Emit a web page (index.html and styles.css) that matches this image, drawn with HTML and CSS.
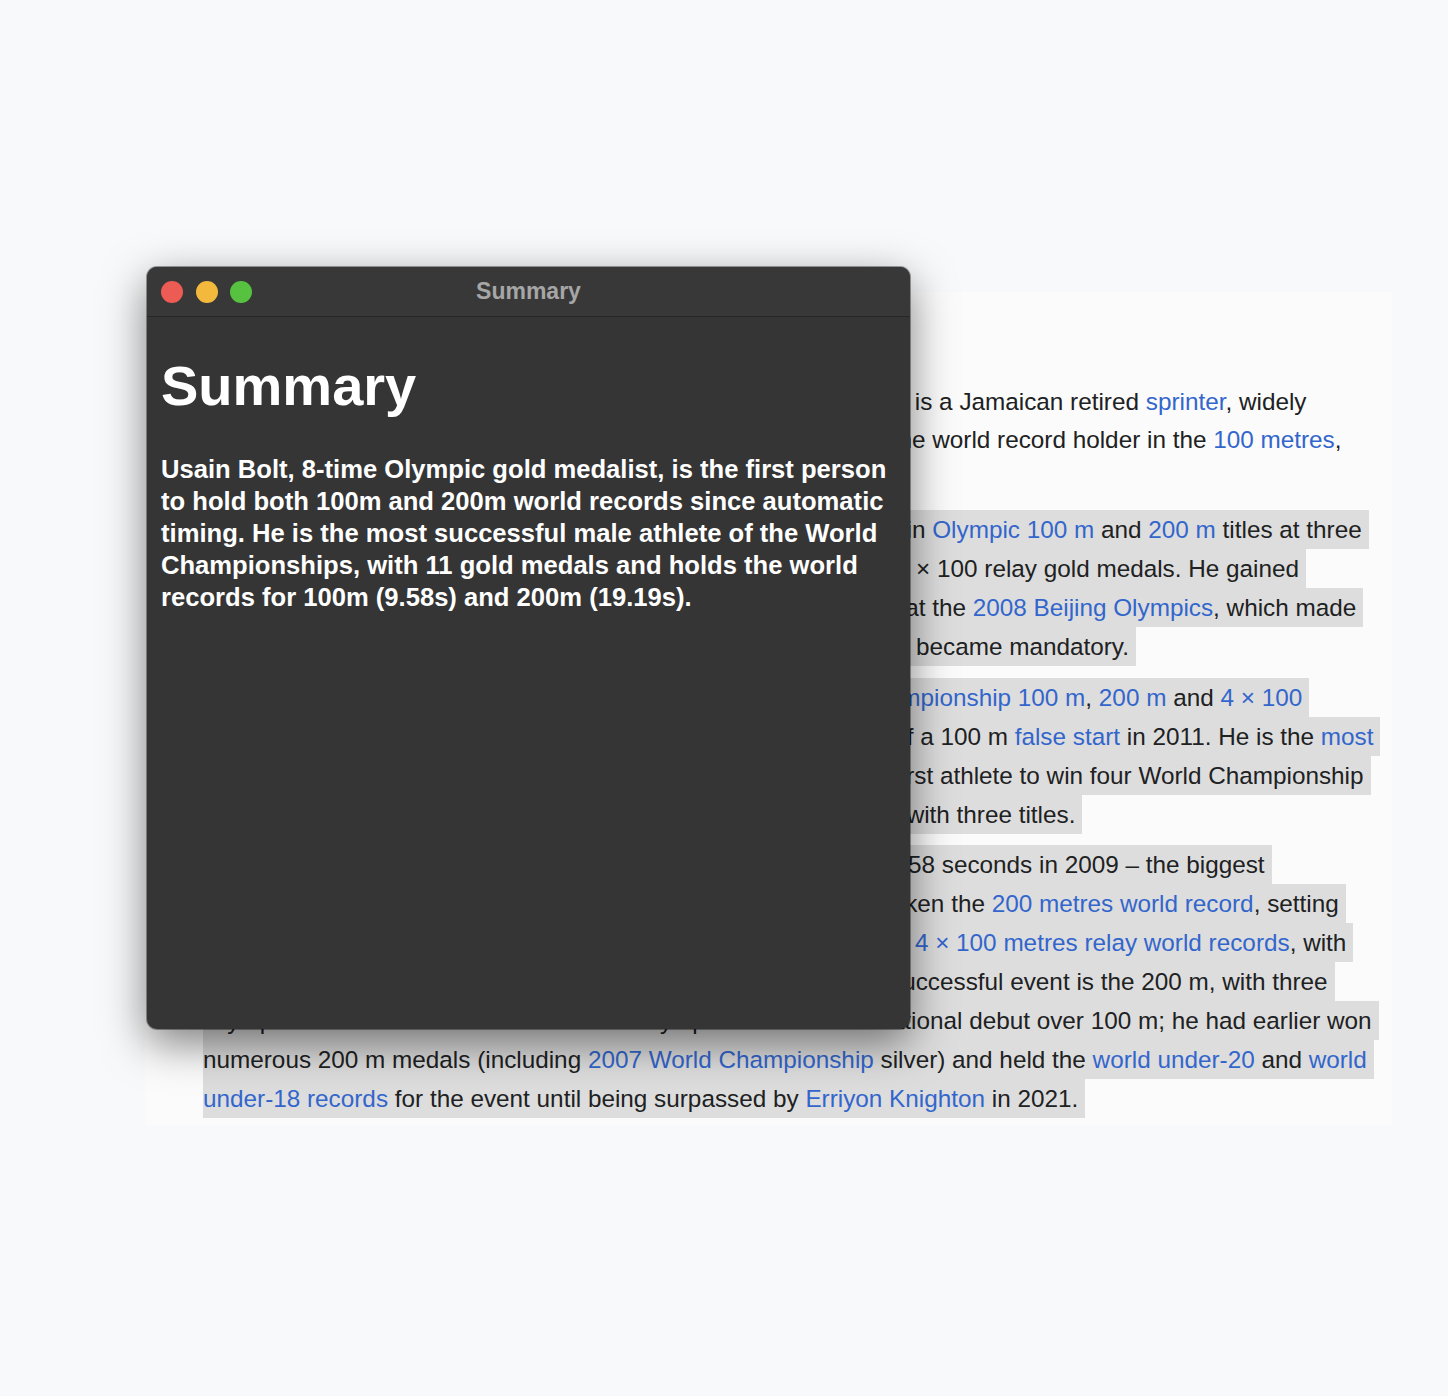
FILE: index.html
```html
<!DOCTYPE html>
<html lang="en">
<head>
<meta charset="utf-8">
<title>Summary</title>
<link rel="stylesheet" href="styles.css">
</head>
<body>
<div class="page">
  <article class="card">
    <p>Usain St Leo Bolt CD (/ˈjuːseɪn/ YOO-sayn; born 21 August 1986) is a Jamaican retired <a href="#">sprinter</a>, widely<br>considered to be the greatest sprinter of all time. He is currently the world record holder in the <a href="#">100 metres</a>,<br><a href="#">200 metres</a> and <a href="#">4 × 100 metres relay</a>.</p>
    <p><span class="hl">An eight-time Olympic gold medallist, Bolt is the only sprinter to win <a href="#">Olympic 100 m</a> and <a href="#">200 m</a> titles at three<br>consecutive Olympics (2008, 2012, and 2016). He also won two 4 × 100 relay gold medals. He gained<br>worldwide fame for his double sprint victory in world record times at the <a href="#">2008 Beijing Olympics</a>, which made<br>him the first person to hold both records since fully automatic time became mandatory.</span></p>
    <p><span class="hl">An eleven-time World Champion, he won consecutive <a href="#">World Championship 100 m</a>, <a href="#">200 m</a> and <a href="#">4 × 100<br>metres relay</a> gold medals from 2009 to 2015, with the exception of a 100 m <a href="#">false start</a> in 2011. He is the <a href="#">most<br>successful male athlete of the World Championships</a>. Bolt is the first athlete to win four World Championship<br>titles in the 200 m and is one of the most successful in the 100 m with three titles.</span></p>
    <p><span class="hl">Bolt improved upon his second 100 m world record of 9.69 with 9.58 seconds in 2009 – the biggest<br>improvement since the start of electronic timing. He has twice broken the <a href="#">200 metres world record</a>, setting<br>19.30 in 2008 and 19.19 in 2009. He has helped Jamaica to three <a href="#">4 × 100 metres relay world records</a>, with<br>the current record being 36.84 seconds set in 2012. Bolt’s most successful event is the 200 m, with three<br>Olympic and four World titles. The 2008 Olympics was his international debut over 100 m; he had earlier won<br>numerous 200 m medals (including <a href="#">2007 World Championship</a> silver) and held the <a href="#">world under-20</a> and <a href="#">world<br>under-18 records</a> for the event until being surpassed by <a href="#">Erriyon Knighton</a> in 2021.</span></p>
  </article>

  <section class="window">
    <header class="titlebar">
      <div class="lights">
        <span class="dot dot-close"></span>
        <span class="dot dot-min"></span>
        <span class="dot dot-max"></span>
      </div>
      <div class="title">Summary</div>
      <div></div>
    </header>
    <div class="content">
      <h1>Summary</h1>
      <p class="summary">Usain Bolt, 8-time Olympic gold medalist, is the first person to hold both 100m and 200m world records since automatic timing. He is the most successful male athlete of the World Championships, with 11 gold medals and holds the world records for 100m (9.58s) and 200m (19.19s).</p>
    </div>
  </section>
</div>
</body>
</html>
```

FILE: styles.css
```css
html, body {
  margin: 0;
  padding: 0;
}

body {
  background: #f8f9fa;
  font-family: "Liberation Sans", Arial, Helvetica, sans-serif;
}

.page {
  position: relative;
  width: 1448px;
  height: 1396px;
  padding-top: 292px;
  box-sizing: border-box;
  overflow: hidden;
}

.card {
  width: 1247px;
  margin-left: 145px;
  box-sizing: border-box;
  padding: 90.5px 0 6px 58px;
  background: #fbfbfb;
}

.card p {
  margin: 0 0 12px;
  font-size: 24.3px;
  line-height: 38.9px;
  color: #202122;
  white-space: nowrap;
}

.card p:last-child {
  margin-bottom: 0;
}

.card a {
  color: #3366cc;
  text-decoration: none;
}

.hl {
  background: #dddddd;
  padding: 6px 7px 6px 0;
  -webkit-box-decoration-break: clone;
  box-decoration-break: clone;
}

.window {
  position: absolute;
  left: 147px;
  top: 267px;
  width: 763px;
  height: 762px;
  background: #353535;
  border-radius: 10px;
  overflow: hidden;
  box-shadow: 0 0 0 1px rgba(0, 0, 0, 0.35), 0 14px 44px rgba(0, 0, 0, 0.5);
}

.titlebar {
  height: 49px;
  border-bottom: 1px solid #272727;
  background: #383838;
  display: grid;
  grid-template-columns: 1fr auto 1fr;
  align-items: center;
  padding: 0 14px;
}

.lights {
  display: flex;
  gap: 12.5px;
}

.dot {
  width: 22px;
  height: 22px;
  border-radius: 50%;
}

.dot-close { background: #ed5b55; }
.dot-min { background: #f3b93c; }
.dot-max { background: #56c23f; }

.title {
  font-size: 23px;
  font-weight: bold;
  color: #a6a6a6;
}

.content {
  padding: 41px 14px 0;
}

.content h1 {
  margin: 0;
  font-size: 56px;
  line-height: 56px;
  font-weight: bold;
  color: #ffffff;
}

.summary {
  margin: 39px 0 0;
  font-size: 25.6px;
  line-height: 32px;
  font-weight: bold;
  color: #ffffff;
}
```
